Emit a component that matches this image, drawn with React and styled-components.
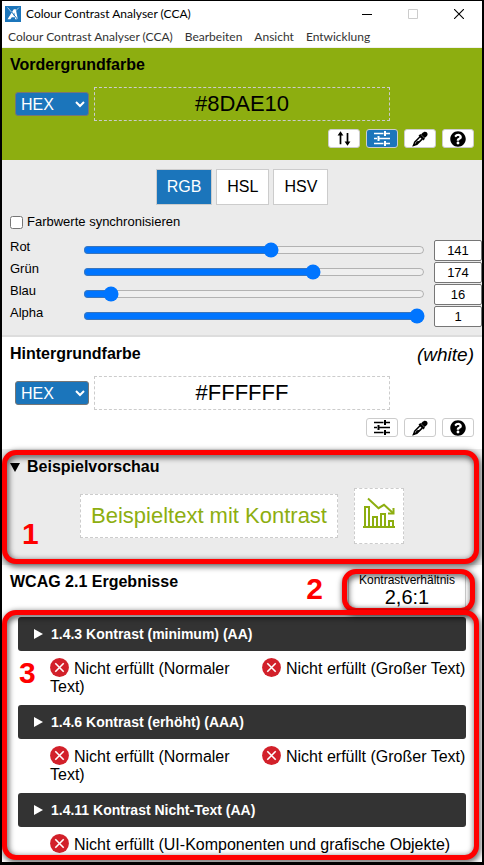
import React, { useState } from "react";

import styled, { createGlobalStyle } from "styled-components";
import { FaQuestionCircle } from "react-icons/fa";

const GlobalStyle = createGlobalStyle`
  * {
    box-sizing: border-box;
  }

  body {
    background: #000;
    margin: 0;
  }

  button,
  input,
  select {
    font-family: inherit;
    margin: 0;
  }
`;

const Window = styled.div`
  background: #fff;
  border: 2px solid #000;
  border-top-width: 1px;
  color: #000;
  font-family: "Liberation Sans", Arial, sans-serif;
  font-size: 16px;
  line-height: 18px;
  overflow: hidden;
`;

const TitleBar = styled.header`
  align-items: center;
  display: flex;
  font-family: Lato, "Noto Sans", sans-serif;
  gap: 5px;
  height: 26px;
  padding-left: 3px;
`;

const Title = styled.h1`
  flex: 1;
  font-size: 12px;
  font-weight: 400;
  margin: 0;
  white-space: nowrap;
`;

const WindowButton = styled.button`
  align-items: center;
  background: none;
  border: 0;
  color: ${props => (props.disabled ? "#ccc" : "#000")};
  display: flex;
  height: 26px;
  justify-content: center;
  padding: 0;
  width: 46px;
`;

const WindowButtons = styled.div`
  display: flex;
`;

const MenuBar = styled.nav`
  align-items: center;
  border-bottom: 1px solid #f0f0f0;
  display: flex;
  font-family: Lato, "Noto Sans", sans-serif;
  height: 21px;
`;

const MenuItem = styled.button`
  background: none;
  border: 0;
  color: #333;
  font-size: 12px;
  line-height: 20px;
  padding: 0 6px;
  white-space: nowrap;
`;

const ColourSection = styled.section`
  background: ${props => props.$colour};
  display: grid;
  grid-template-rows: 39px 34px auto;
  height: 112px;
  padding: 0 8px;
`;

const SectionHead = styled.div`
  display: flex;
  justify-content: space-between;
  padding-top: 8px;
`;

const Heading = styled.h2`
  font-size: 16px;
  font-weight: 700;
  line-height: 18px;
  margin: 0;
`;

const ColourName = styled.em`
  font-size: 19px;
  line-height: 20px;
`;

const ValueRow = styled.div`
  align-items: center;
  display: flex;
  gap: 5px;
  padding: 0 84px 0 5px;
`;

const FormatSelect = styled.select`
  background: #1b75bb;
  border: 1px solid #767676;
  border-radius: 3px;
  color: #fff;
  font-size: 16px;
  height: 24px;
  padding: 0 2px 0 1px;
  width: 74px;
`;

const ColourInput = styled.input`
  background: transparent;
  border: 1px dashed #ccc;
  color: #000;
  flex: 1;
  font-size: 22px;
  height: 34px;
  min-width: 0;
  padding: 0;
  text-align: center;
`;

const ToolRow = styled.div`
  display: flex;
  gap: 6px;
  justify-content: flex-end;
  padding-top: 8px;
`;

const ToolButton = styled.button`
  align-items: center;
  background: ${props => (props.$active ? "#1b75bb" : "#fff")};
  border: 1px solid #ccc;
  border-radius: 3px;
  color: ${props => (props.$active ? "#fff" : "#000")};
  display: flex;
  height: 19px;
  justify-content: center;
  padding: 0;
  width: 32px;
`;

const SliderPanel = styled.section`
  background: #ebebeb;
  border-bottom: 2px solid #ddd;
  padding: 9px 0 8px 8px;
`;

const ModeTabs = styled.div`
  display: flex;
  gap: 4px;
  justify-content: center;
  padding-right: 8px;
`;

const ModeTab = styled.button`
  background: ${props => (props.$active ? "#1b75bb" : "#fff")};
  border: 1px solid #ccc;
  color: ${props => (props.$active ? "#fff" : "#000")};
  font-size: 16px;
  height: 36px;
  padding: 0 10px;
`;

const SyncLabel = styled.label`
  align-items: center;
  display: flex;
  font-size: 13px;
  gap: 4px;
  padding: 8px 0;
`;

const SyncBox = styled.input`
  height: 13px;
  width: 13px;
`;

const ChannelRow = styled.div`
  align-items: center;
  display: grid;
  font-size: 13px;
  grid-template-columns: 73px 1fr 48px;
  height: 22px;
`;

const ChannelLabel = styled.label`
  line-height: 16px;
  padding-bottom: 6px;
`;

const ChannelRange = styled.input`
  margin-right: 9px;
`;

const ChannelValue = styled.input`
  border: 1px solid #767676;
  border-radius: 2px;
  font-size: 13px;
  height: 21px;
  padding: 0;
  text-align: center;
  width: 48px;
`;

const Preview = styled.details`
  background: #ebebeb;
  height: 116px;
  padding: 9px 8px 0;
  position: relative;
`;

const PreviewSummary = styled.summary`
  align-items: center;
  display: flex;
  font-weight: 700;
  gap: 7px;
  list-style: none;

  &::before {
    border-left: 5px solid transparent;
    border-right: 5px solid transparent;
    border-top: 9px solid #000;
    content: "";
  }
`;

const PreviewBody = styled.div`
  align-items: center;
  display: flex;
  gap: 16px;
  justify-content: center;
  padding-top: 12px;
`;

const SampleText = styled.div`
  background: #fff;
  border: 1px dashed #ccc;
  color: #8dae10;
  font-size: 22px;
  line-height: 42px;
  padding: 0 10px;
  white-space: nowrap;
`;

const SampleIcon = styled.div`
  align-items: center;
  background: #fff;
  border: 1px dashed #ccc;
  color: #8dae10;
  display: flex;
  height: 56px;
  justify-content: center;
  padding-bottom: 6px;
  width: 50px;
`;

const Results = styled.section`
  padding: 0 16px 8px;
  position: relative;
`;

const ResultsHead = styled.div`
  display: flex;
  height: 52px;
  justify-content: space-between;
  margin-left: -8px;
  padding: 8px 0;
`;

const Ratio = styled.div`
  align-items: center;
  border: 1px solid #ccc;
  border-top: 0;
  display: flex;
  flex-direction: column;
  height: 40px;
  width: 118px;
`;

const RatioLabel = styled.span`
  font-size: 12px;
  line-height: 14px;
`;

const RatioValue = styled.span`
  font-size: 20px;
  line-height: 20px;
`;

const Criterion = styled.article`
  min-height: 88px;

  &:last-of-type {
    min-height: 0;
  }
`;

const CriterionHeading = styled.h3`
  margin: 0;
`;

const CriterionButton = styled.button`
  align-items: center;
  background: #333;
  border: 0;
  border-radius: 3px;
  color: #fff;
  display: flex;
  font-size: 14px;
  font-weight: 700;
  gap: 8px;
  height: 34px;
  padding: 0 16px;
  width: 100%;

  &::before {
    border-bottom: 5px solid transparent;
    border-left: 9px solid #fff;
    border-top: 5px solid transparent;
    content: "";
  }
`;

const Verdicts = styled.div`
  display: grid;
  gap: 12px;
  grid-template-columns: ${props =>
    props.$single ? "1fr" : "minmax(0, 200px) 1fr"};
  padding: 7px 0 0 32px;
`;

const Verdict = styled.p`
  line-height: 18px;
  margin: 0;

  svg {
    margin-right: 5px;
    vertical-align: -3px;
  }
`;

// Red marker frame laid over the part of the window it explains
const Marker = styled.div`
  border: 5px solid #f00;
  border-radius: 14px;
  bottom: ${props => props.$bottom};
  filter: drop-shadow(1px 2px 3px rgba(0, 0, 0, 0.8));
  height: ${props => props.$height};
  left: ${props => props.$left};
  pointer-events: none;
  position: absolute;
  right: ${props => props.$right};
  top: ${props => props.$top};
  width: ${props => props.$width};
`;

const MarkerNumber = styled.span`
  color: #f00;
  font-size: 30px;
  font-weight: 700;
  left: ${props => props.$left};
  line-height: 30px;
  position: absolute;
  right: ${props => props.$right};
  top: ${props => props.$top};
`;

const AppIcon = () => (
  <svg width="16" height="16" viewBox="0 0 16 16" aria-hidden="true">
    <rect width="16" height="16" fill="#1b75bb" />
    <path
      d="M2.5 13.2 8.8 3.2h2L12.8 13.2h-2.6l-.3-2H6.8l-1.4 2z"
      fill="#fff"
    />
    <path d="M8 9.2 9.3 6.6l.3 2.6z" fill="#1b75bb" />
    <path d="M3.5 2 13.5 14.5" stroke="#1b75bb" strokeWidth="1" />
    <path
      d="m2.5 1.5 4 4.6M14 1.5 10.5 5"
      stroke="#cfe2f2"
      strokeWidth=".8"
    />
  </svg>
);

const MinimizeIcon = () => (
  <svg width="10" height="10" viewBox="0 0 10 10" aria-hidden="true">
    <path d="M0 5.5h10" stroke="currentColor" />
  </svg>
);

const MaximizeIcon = () => (
  <svg width="10" height="10" viewBox="0 0 10 10" aria-hidden="true">
    <path d="M.5.5h9v9h-9z" fill="none" stroke="currentColor" />
  </svg>
);

const CloseIcon = () => (
  <svg width="10" height="10" viewBox="0 0 10 10" aria-hidden="true">
    <path d="m0 0 10 10M10 0 0 10" stroke="currentColor" strokeWidth="1.1" />
  </svg>
);

const SwapIcon = () => (
  <svg width="14" height="15" viewBox="0 0 14 15" aria-hidden="true">
    <path d="M3.5 13.3V2M10.5 2v11" stroke="currentColor" strokeWidth="1.7" />
    <path
      d="M.6 4.6 3.5.3l2.9 4.3zM7.6 10.4l2.9 4.3 2.9-4.3z"
      fill="currentColor"
    />
  </svg>
);

const SlidersIcon = () => (
  <svg width="16" height="15" viewBox="0 0 16 15" aria-hidden="true">
    <path
      d="M0 2.5h9.5M11 2.5h5M0 7.5h3M5 7.5h11M0 12.5h9.5M11 12.5h5"
      stroke="currentColor"
      strokeWidth="1.3"
    />
    <path
      d="M11 0v5M4.5 5v5M11 10v5"
      stroke="currentColor"
      strokeWidth="2"
    />
  </svg>
);

const DropperIcon = () => (
  <svg width="16" height="16" viewBox="0 0 16 16" aria-hidden="true">
    <path
      d="m9 3.6 1.4-1.5c1.2-1.4 2.9-2 4.3-.8 1.4 1.3 1 3-.3 4.2l-1.8 1.6z"
      fill="currentColor"
    />
    <path d="m7.4 3.9 4.7 4.7" stroke="currentColor" strokeWidth="2.6" />
    <path
      d="m8 5.8-5.3 5.4-1 3.1 3.1-1 5.3-5.2"
      fill="none"
      stroke="currentColor"
      strokeWidth="1.5"
    />
    <path d="m4.8 10.2 4-.4-3.7 3.6-2.6.6z" fill="currentColor" />
    <path d="M1.4 13 .3 15.6l2.6-1z" fill="currentColor" />
  </svg>
);

const ChartIcon = () => (
  <svg width="32" height="32" viewBox="0 0 32 32" aria-hidden="true">
    <g fill="none" stroke="currentColor" strokeWidth="2">
      <path d="M0 30h32M2 30V10h4v20M10 30V20h4v10M18 30V17h4v13M26 30v-6h4v6" />
      <path d="m5 1.5 10.5 9.7 5.5-3.4L30 16" />
      <path d="M30.5 11v5.5H25" />
    </g>
  </svg>
);

const FailIcon = () => (
  <svg width="19" height="19" viewBox="0 0 19 19" role="img" aria-label="Fehler">
    <circle cx="9.5" cy="9.5" r="9.4" fill="#d2202a" />
    <path
      d="m5.3 5.3 8.4 8.4m0-8.4-8.4 8.4"
      stroke="#fff"
      strokeWidth="1.6"
    />
  </svg>
);

const menuItems = [
  "Colour Contrast Analyser (CCA)",
  "Bearbeiten",
  "Ansicht",
  "Entwicklung"
];

const criteria = [
  {
    title: "1.4.3 Kontrast (minimum) (AA)",
    verdicts: ["Nicht erfüllt (Normaler Text)", "Nicht erfüllt (Großer Text)"]
  },
  {
    title: "1.4.6 Kontrast (erhöht) (AAA)",
    verdicts: ["Nicht erfüllt (Normaler Text)", "Nicht erfüllt (Großer Text)"]
  },
  {
    title: "1.4.11 Kontrast Nicht-Text (AA)",
    verdicts: ["Nicht erfüllt (UI-Komponenten und grafische Objekte)"]
  }
];

function ColourPicker(props) {
  return (
    <ColourSection $colour={props.value}>
      <SectionHead>
        <Heading>{props.title}</Heading>
        {props.name && <ColourName>({props.name})</ColourName>}
      </SectionHead>
      <ValueRow>
        <FormatSelect aria-label={`${props.title} Format`}>
          <option>HEX</option>
          <option>RGB</option>
          <option>HSL</option>
          <option>HSV</option>
        </FormatSelect>
        <ColourInput aria-label={props.title} defaultValue={props.value} />
      </ValueRow>
      <ToolRow>
        {props.canSwap && (
          <ToolButton aria-label="Farben tauschen">
            <SwapIcon />
          </ToolButton>
        )}
        <ToolButton aria-label="Schieberegler" $active={props.slidersOpen}>
          <SlidersIcon />
        </ToolButton>
        <ToolButton aria-label="Pipette">
          <DropperIcon />
        </ToolButton>
        <ToolButton aria-label="Hilfe">
          <FaQuestionCircle size={16} />
        </ToolButton>
      </ToolRow>
    </ColourSection>
  );
}

function Channel(props) {
  const [value, setValue] = useState(props.value);
  const onChange = e => setValue(e.target.value);

  return (
    <ChannelRow>
      <ChannelLabel htmlFor={props.label}>{props.label}</ChannelLabel>
      <ChannelRange
        id={props.label}
        type="range"
        min="0"
        max={props.max}
        value={value}
        onChange={onChange}
      />
      <ChannelValue
        aria-label={`${props.label} Wert`}
        value={value}
        onChange={onChange}
      />
    </ChannelRow>
  );
}

function App() {
  const [mode, setMode] = useState("RGB");

  return (
    <Window>
      <GlobalStyle />
      <TitleBar>
        <AppIcon />
        <Title>Colour Contrast Analyser (CCA)</Title>
        <WindowButtons>
          <WindowButton aria-label="Minimieren">
            <MinimizeIcon />
          </WindowButton>
          <WindowButton aria-label="Maximieren" disabled>
            <MaximizeIcon />
          </WindowButton>
          <WindowButton aria-label="Schließen">
            <CloseIcon />
          </WindowButton>
        </WindowButtons>
      </TitleBar>
      <MenuBar>
        {menuItems.map(item => (
          <MenuItem key={item}>{item}</MenuItem>
        ))}
      </MenuBar>

      <ColourPicker
        title="Vordergrundfarbe"
        value="#8DAE10"
        canSwap
        slidersOpen
      />
      <SliderPanel>
        <ModeTabs>
          {["RGB", "HSL", "HSV"].map(name => (
            <ModeTab
              key={name}
              $active={mode === name}
              onClick={() => setMode(name)}
            >
              {name}
            </ModeTab>
          ))}
        </ModeTabs>
        <SyncLabel>
          <SyncBox type="checkbox" />
          Farbwerte synchronisieren
        </SyncLabel>
        <Channel label="Rot" max="255" value="141" />
        <Channel label="Grün" max="255" value="174" />
        <Channel label="Blau" max="255" value="16" />
        <Channel label="Alpha" max="1" value="1" />
      </SliderPanel>
      <ColourPicker title="Hintergrundfarbe" value="#FFFFFF" name="white" />

      <Preview open>
        <PreviewSummary>Beispielvorschau</PreviewSummary>
        <PreviewBody>
          <SampleText>Beispieltext mit Kontrast</SampleText>
          <SampleIcon>
            <ChartIcon />
          </SampleIcon>
        </PreviewBody>
        <Marker $left="0" $right="3px" $top="1px" $bottom="1px" />
        <MarkerNumber $left="20px" $top="70px">
          1
        </MarkerNumber>
      </Preview>

      <Results>
        <ResultsHead>
          <Heading>WCAG 2.1 Ergebnisse</Heading>
          <Ratio>
            <RatioLabel>Kontrastverhältnis</RatioLabel>
            <RatioValue>2,6:1</RatioValue>
          </Ratio>
        </ResultsHead>
        {criteria.map(({ title, verdicts }) => (
          <Criterion key={title}>
            <CriterionHeading>
              <CriterionButton aria-expanded="false">{title}</CriterionButton>
            </CriterionHeading>
            <Verdicts $single={verdicts.length === 1}>
              {verdicts.map(text => (
                <Verdict key={text}>
                  <FailIcon />
                  {text}
                </Verdict>
              ))}
            </Verdicts>
          </Criterion>
        ))}
        <Marker $right="7px" $top="4px" $width="133px" $height="44px" />
        <MarkerNumber $right="159px" $top="9px">
          2
        </MarkerNumber>
        <Marker $left="0" $right="3px" $top="45px" $bottom="2px" />
        <MarkerNumber $left="17px" $top="93px">
          3
        </MarkerNumber>
      </Results>
    </Window>
  );
}

export default App;
